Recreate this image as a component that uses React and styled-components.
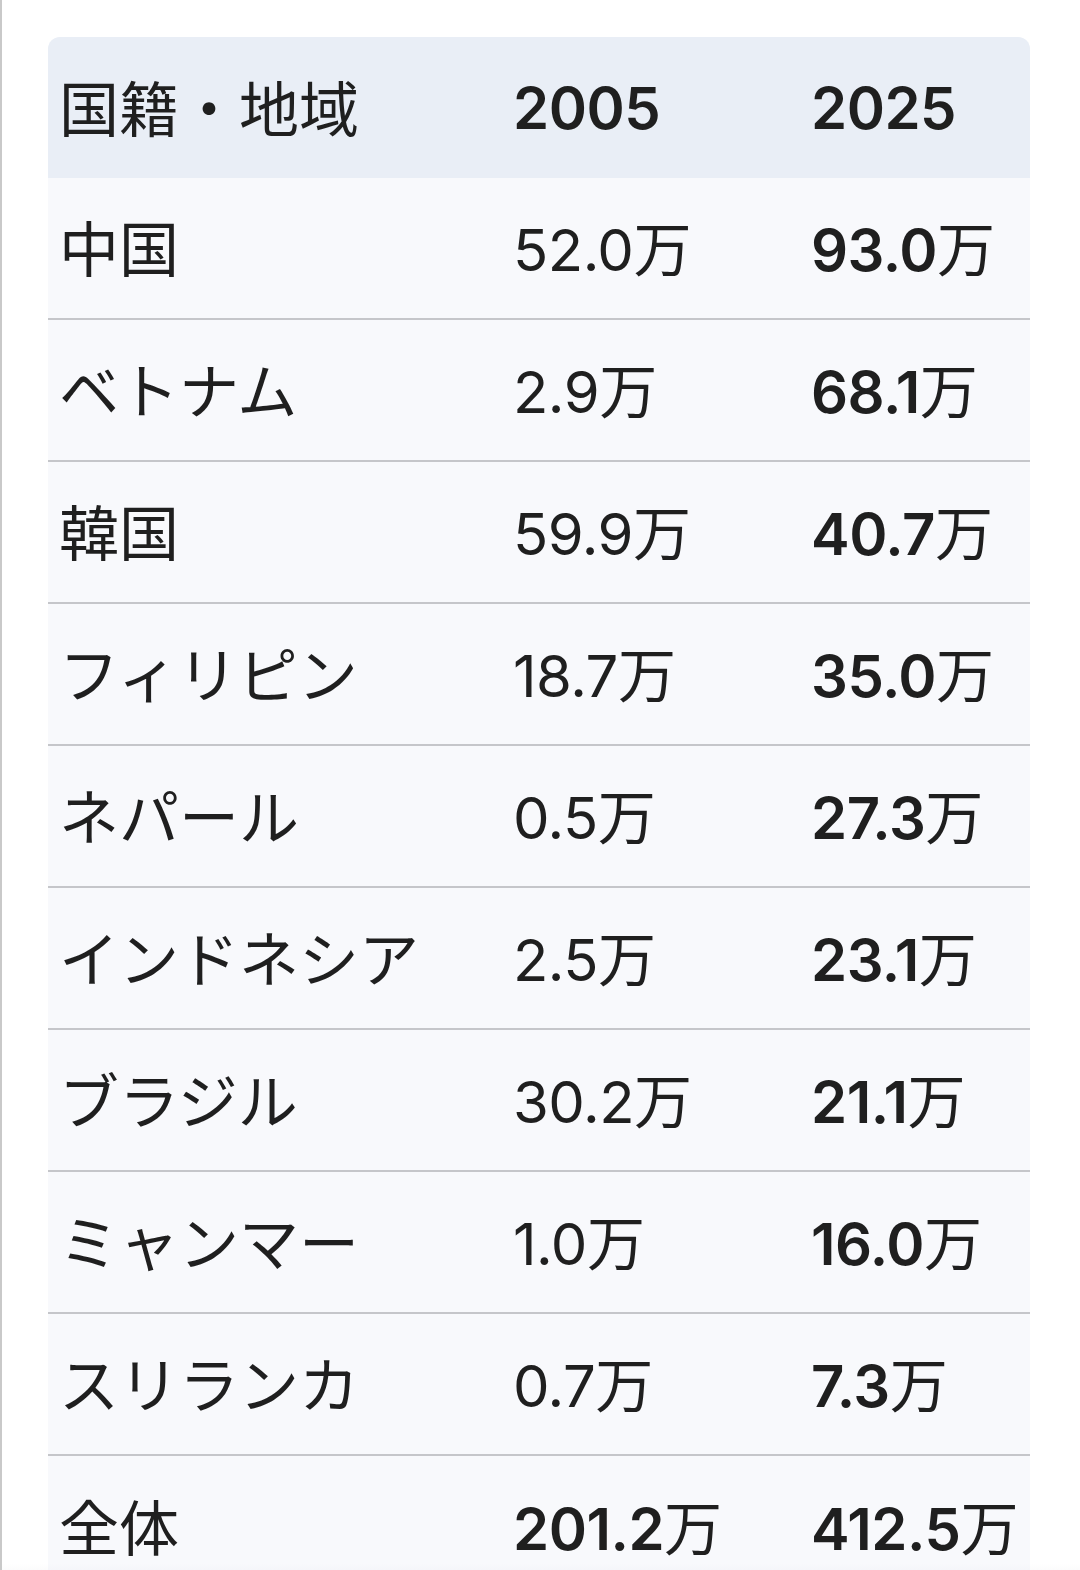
import React from 'react';
import styled, { createGlobalStyle } from 'styled-components';

const GlobalStyle = createGlobalStyle`
  html, body {
    margin: 0;
    padding: 0;
    background: #ffffff;
  }
  body {
    font-family: Inter, "Noto Sans CJK JP", sans-serif;
    color: #1f1f1f;
  }
`;

const StyledPage = styled.div`
  position: relative;
  min-height: 1570px;
  box-sizing: border-box;
  border-left: 2px solid #c9c9c9;
  padding-top: 37px;
  padding-left: 46px;
  overflow: hidden;
`;

const StyledTable = styled.div`
  width: 982px;
  border-radius: 12px 12px 0 0;
  overflow: hidden;
  background-color: #f8f9fc;
`;

const StyledRow = styled.div`
  display: grid;
  grid-template-columns: 451px 298px 233px;
  align-items: center;
  box-sizing: border-box;
  height: ${({ header }) => (header ? '141px' : '142px')};
  background-color: ${({ header }) => (header ? '#e9eef6' : '#f8f9fc')};
  border-bottom: ${({ header, last }) => (header || last ? 'none' : '2px solid #c5c6ca')};
`;

const StyledCell = styled.div`
  padding-left: ${({ num }) => (num ? '14px' : '11px')};
  font-size: 58px;
  line-height: 1;
  font-weight: ${({ bold }) => (bold ? 600 : 400)};
  letter-spacing: ${({ num }) => (num ? '-0.5px' : '0')};
  white-space: nowrap;
`;

const StyledName = styled.span`
  font-family: "Noto Sans CJK JP", sans-serif;
  font-size: 60px;
  font-weight: 400;
`;

const StyledUnit = styled.span`
  font-family: "Noto Sans CJK JP", sans-serif;
  font-weight: 400;
`;

const StyledFade = styled.div`
  position: absolute;
  left: 0;
  right: 0;
  bottom: 0;
  height: 34px;
  background: linear-gradient(to bottom, rgba(235, 235, 240, 0), rgba(225, 225, 232, 0.7));
  pointer-events: none;
`;

const rows = [
  { name: '中国', a: '52.0', b: '93.0' },
  { name: 'ベトナム', a: '2.9', b: '68.1' },
  { name: '韓国', a: '59.9', b: '40.7' },
  { name: 'フィリピン', a: '18.7', b: '35.0' },
  { name: 'ネパール', a: '0.5', b: '27.3' },
  { name: 'インドネシア', a: '2.5', b: '23.1' },
  { name: 'ブラジル', a: '30.2', b: '21.1' },
  { name: 'ミャンマー', a: '1.0', b: '16.0' },
  { name: 'スリランカ', a: '0.7', b: '7.3' },
  { name: '全体', a: '201.2', b: '412.5', total: true },
];

const Amount = ({ value }) => (
  <>
    {value}
    <StyledUnit>万</StyledUnit>
  </>
);

const App = () => (
  <>
    <GlobalStyle />
    <StyledPage>
      <StyledTable>
        <StyledRow header>
          <StyledCell>
            <StyledName>国籍・地域</StyledName>
          </StyledCell>
          <StyledCell num bold>2005</StyledCell>
          <StyledCell num bold>2025</StyledCell>
        </StyledRow>
        {rows.map((row, i) => (
          <StyledRow key={row.name} last={i === rows.length - 1}>
            <StyledCell>
              <StyledName>{row.name}</StyledName>
            </StyledCell>
            <StyledCell num bold={row.total}>
              <Amount value={row.a} />
            </StyledCell>
            <StyledCell num bold>
              <Amount value={row.b} />
            </StyledCell>
          </StyledRow>
        ))}
      </StyledTable>
      <StyledFade />
    </StyledPage>
  </>
);

export default App;
